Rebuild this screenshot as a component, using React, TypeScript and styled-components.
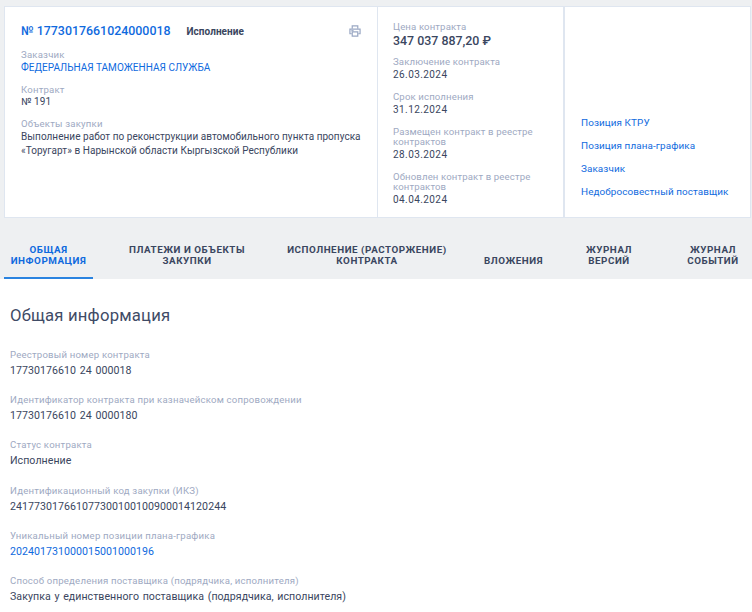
import React from 'react';
import styled, { createGlobalStyle } from 'styled-components';

const GlobalStyle = createGlobalStyle`
  html, body {
    margin: 0;
    padding: 0;
    background: #fff;
    overflow: hidden;
  }
  body {
    font-family: Roboto, "Liberation Sans", sans-serif;
    color: #3a4660;
  }
`;

const Page = styled.div`
  width: 752px;
  height: 612px;
  overflow: hidden;
`;

const Head = styled.div`
  background: #eef0f2;
  padding: 6px 0 0 4px;
`;

const Card = styled.div`
  display: grid;
  grid-template-columns: 372px 188px 1fr;
  height: 212px;
  width: 747px;
  box-sizing: border-box;
  background: #fff;
  border: 1px solid #dfe6f0;
`;

const Main = styled.div`
  padding: 15px 10px 0 16px;
`;

const TitleRow = styled.div`
  display: flex;
  align-items: center;
  height: 18px;
  margin-bottom: 10px;
`;

const Number = styled.a`
  font-size: 12.4px;
  font-weight: 500;
  line-height: 18px;
  color: #0f6ade;
`;

const Status = styled.span`
  margin-left: 16px;
  font-size: 10px;
  font-weight: 700;
  letter-spacing: 0.05px;
  color: #3a4660;
`;

const PrintIcon = styled.svg`
  margin-left: auto;
  margin-right: 6px;
  width: 12px;
  height: 12px;
  color: #9aa8c4;
`;

const Info = styled.div`
  display: flex;
  flex-direction: column;
  margin-bottom: 11px;
`;

const Label = styled.span`
  font-size: 9.6px;
  line-height: 10px;
  letter-spacing: 0.2px;
  color: #9ea9c2;
`;

const Value = styled.span`
  margin-top: 0.5px;
  font-size: 10px;
  line-height: 13px;
  letter-spacing: 0.15px;
  color: #3a4660;
`;

const BlueValue = styled(Value)`
  color: #0f6ade;
  letter-spacing: 0.03px;
`;

const LongValue = styled(Value)`
  margin-top: 0.5px;
  line-height: 14px;
  letter-spacing: 0.04px;
`;

const Side = styled.div`
  padding: 15px 16px 0 15px;
  border-left: 1px solid #dfe6f0;
  border-right: 2px solid #dfe6f0;
`;

const SideLabel = styled(Label)`
  letter-spacing: 0.13px;
`;

const PriceLabel = styled(SideLabel)`
  display: block;
`;

const Price = styled.div`
  margin-top: 1px;
  margin-bottom: 8px;
  font-size: 12.4px;
  line-height: 16px;
  font-weight: 500;
  color: #3a4660;
`;

const SideInfo = styled(Info)`
  margin-bottom: 11.5px;
`;

const SideValue = styled(Value)`
  margin-top: 1.5px;
  line-height: 12px;
  letter-spacing: 0.42px;
`;

const Links = styled.div`
  display: flex;
  flex-direction: column;
  justify-content: flex-end;
  gap: 9px;
  padding: 0 0 18px 16px;
`;

const SideLink = styled.a`
  font-size: 9.9px;
  line-height: 14px;
  letter-spacing: 0.1px;
  color: #0f6ade;
`;

const Tabs = styled.div`
  display: flex;
  height: 61px;
`;

const Tab = styled.div<{ $active?: boolean; $width: number; $gap: number }>`
  display: flex;
  align-items: flex-end;
  justify-content: center;
  box-sizing: border-box;
  flex: none;
  width: ${props => props.$width}px;
  margin-right: ${props => props.$gap}px;
  padding-bottom: 11.5px;
  text-align: center;
  font-size: 9.8px;
  line-height: 11px;
  font-weight: 700;
  letter-spacing: 0.55px;
  color: ${props => (props.$active ? '#0f6ade' : '#3a4660')};
  border-bottom: 2px solid ${props => (props.$active ? '#2a83e0' : 'transparent')};
`;

const Content = styled.div`
  padding: 27px 10px 0 10px;
`;

const Heading = styled.h2`
  margin: 0 0 22.7px;
  font-size: 16.7px;
  line-height: 20px;
  font-weight: 400;
  letter-spacing: 0.2px;
  color: #3f4b66;
`;

const Field = styled.div`
  display: flex;
  flex-direction: column;
  margin-bottom: 16.3px;
`;

const FieldLabel = styled.span`
  font-size: 9.6px;
  line-height: 12px;
  letter-spacing: 0.2px;
  color: #9ea9c2;
`;

const FieldValue = styled.span<{ $link?: boolean }>`
  margin-top: 3px;
  font-size: 10.6px;
  line-height: 14px;
  letter-spacing: 0.05px;
  word-spacing: 1px;
  color: ${props => (props.$link ? '#0f6ade' : '#3a4660')};
`;

const tabs = [
  { title: 'ОБЩАЯ ИНФОРМАЦИЯ', width: 89, gap: 29, active: true },
  { title: 'ПЛАТЕЖИ И ОБЪЕКТЫ ЗАКУПКИ', width: 130, gap: 30 },
  { title: 'ИСПОЛНЕНИЕ (РАСТОРЖЕНИЕ) КОНТРАКТА', width: 170, gap: 24.5 },
  { title: 'ВЛОЖЕНИЯ', width: 74, gap: 28.5 },
  { title: 'ЖУРНАЛ ВЕРСИЙ', width: 60, gap: 44 },
  { title: 'ЖУРНАЛ СОБЫТИЙ', width: 60, gap: 0 },
];

const fields = [
  { label: 'Реестровый номер контракта', value: '17730176610 24 000018' },
  { label: 'Идентификатор контракта при казначейском сопровождении', value: '17730176610 24 0000180' },
  { label: 'Статус контракта', value: 'Исполнение' },
  { label: 'Идентификационный код закупки (ИКЗ)', value: '241773017661077300100100900014120244' },
  { label: 'Уникальный номер позиции плана-графика', value: '202401731000015001000196', link: true },
  {
    label: 'Способ определения поставщика (подрядчика, исполнителя)',
    value: 'Закупка у единственного поставщика (подрядчика, исполнителя)',
  },
];

const sideInfo = [
  { label: 'Заключение контракта', value: '26.03.2024' },
  { label: 'Срок исполнения', value: '31.12.2024' },
  { label: 'Размещен контракт в реестре контрактов', value: '28.03.2024' },
  { label: 'Обновлен контракт в реестре контрактов', value: '04.04.2024' },
];

const links = ['Позиция КТРУ', 'Позиция плана-графика', 'Заказчик', 'Недобросовестный поставщик'];

const App: React.FC = () => (
  <Page>
    <GlobalStyle />
    <Head>
      <Card>
        <Main>
          <TitleRow>
            <Number>№ 1773017661024000018</Number>
            <Status>Исполнение</Status>
            <PrintIcon viewBox="0 0 13 13" fill="none" stroke="currentColor" strokeWidth="1.3">
              <path d="M3.5 4V1h6v3" />
              <path d="M3 9.5H1V4.5h11v5h-2" />
              <path d="M3.5 7.5h6v4.5h-6z" />
              <path d="M2.5 6.2h2.5" />
            </PrintIcon>
          </TitleRow>
          <Info>
            <Label>Заказчик</Label>
            <BlueValue>ФЕДЕРАЛЬНАЯ ТАМОЖЕННАЯ СЛУЖБА</BlueValue>
          </Info>
          <Info>
            <Label>Контракт</Label>
            <Value>№ 191</Value>
          </Info>
          <Info>
            <Label>Объекты закупки</Label>
            <LongValue>
              Выполнение работ по реконструкции автомобильного пункта пропуска «Торугарт» в Нарынской
              области Кыргызской Республики
            </LongValue>
          </Info>
        </Main>
        <Side>
          <PriceLabel>Цена контракта</PriceLabel>
          <Price>347 037 887,20 ₽</Price>
          {sideInfo.map(item => (
            <SideInfo key={item.label}>
              <SideLabel>{item.label}</SideLabel>
              <SideValue>{item.value}</SideValue>
            </SideInfo>
          ))}
        </Side>
        <Links>
          {links.map(link => (
            <SideLink key={link}>{link}</SideLink>
          ))}
        </Links>
      </Card>
      <Tabs>
        {tabs.map(tab => (
          <Tab key={tab.title} $active={tab.active} $width={tab.width} $gap={tab.gap}>
            <span>{tab.title}</span>
          </Tab>
        ))}
      </Tabs>
    </Head>
    <Content>
      <Heading>Общая информация</Heading>
      {fields.map(field => (
        <Field key={field.label}>
          <FieldLabel>{field.label}</FieldLabel>
          <FieldValue $link={field.link}>{field.value}</FieldValue>
        </Field>
      ))}
    </Content>
  </Page>
);

export default App;
